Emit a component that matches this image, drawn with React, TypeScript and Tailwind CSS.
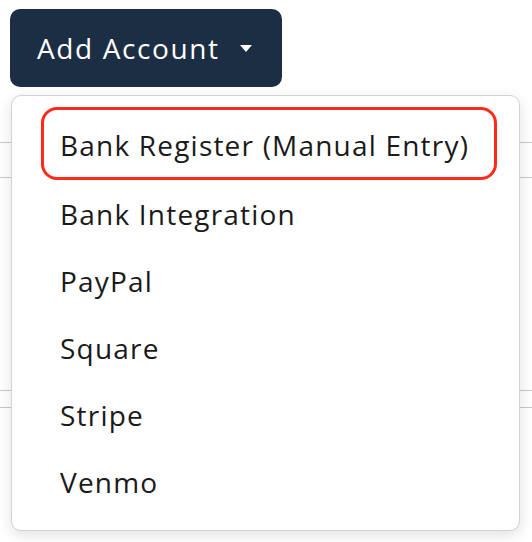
import { useState } from "react";

const options = ["Bank Register (Manual Entry)", "Bank Integration", "PayPal", "Square", "Stripe", "Venmo"];

export default function App() {
  const [selected] = useState(0);

  return (
    <div className="relative w-[532px] h-[542px] bg-white overflow-hidden" style={{ fontFamily: "'Open Sans', Lato, sans-serif" }}>
      <button className="ml-[10px] mt-[9px] flex h-[78px] w-[272px] items-center rounded-[10px] bg-[#1c2e44] pl-[27px] text-[28px] tracking-[1.6px] text-white">
        <span>Add Account</span>
        <span className="ml-[20px] mt-[1px] h-0 w-0 border-x-[6px] border-t-[7px] border-x-transparent border-t-white" />
      </button>

      {/* table rows behind the menu */}
      <div className="h-[56px] border-b border-[#c9c9c9]" />
      <div className="h-[35px] border-b border-[#c9c9c9]" />
      <div className="h-[213px] border-b border-[#c9c9c9]" />
      <div className="h-[17px] border-b border-[#c9c9c9]" />

      <div className="absolute left-[11px] top-[95px] w-[509px] rounded-[10px] border border-[#d2d2d2] bg-white pb-[15px] pt-[11px] shadow-[0_4px_14px_rgba(0,0,0,0.12)]">
        {options.map((label, i) =>
          i === selected ? (
            <div
              key={label}
              className="ml-[29px] flex h-[73px] w-[456px] items-center rounded-[16px] border-[3px] border-[#ff2a1a] pl-[16px] pt-[2px] text-[28px] tracking-[1.2px] text-[#1a1a1a]"
            >
              {label}
            </div>
          ) : (
            <div key={label} className="flex h-[67px] items-center pl-[48px] text-[28px] tracking-[1.2px] text-[#1a1a1a]">
              {label}
            </div>
          )
        )}
      </div>
    </div>
  );
}
